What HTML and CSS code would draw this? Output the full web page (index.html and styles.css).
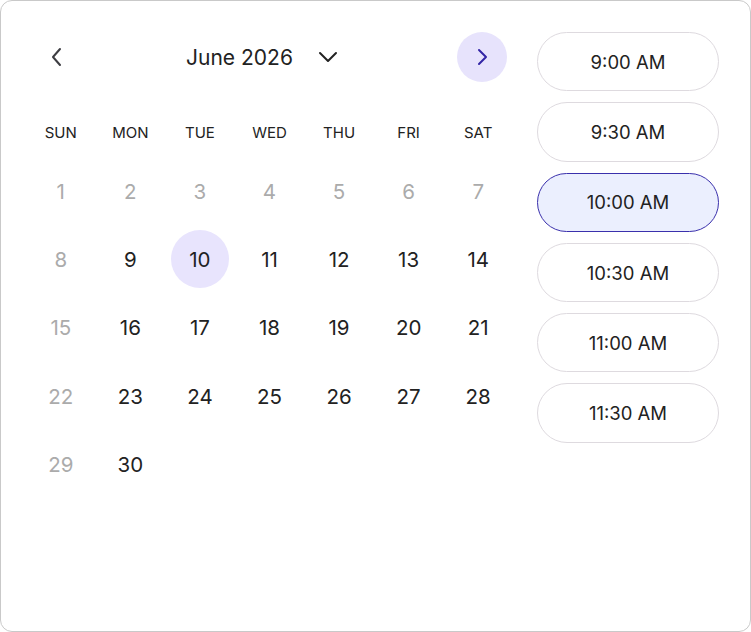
FILE: index.html
```html
<!DOCTYPE html>
<html lang="en">
<head>
    <meta charset="UTF-8">
    <meta name="viewport" content="width=device-width, initial-scale=1.0">
    <title>Book a time</title>
    <link rel="stylesheet" href="styles.css">
</head>
<body>
    <div class="booking">
        <div class="calendar">
            <div class="cal-header">
                <button class="nav-btn" aria-label="Previous month">
                    <svg width="20" height="20" viewBox="0 0 20 20"><path d="M13 2 L6 10 L13 18" fill="none" stroke="#3d3d42" stroke-width="2" stroke-linecap="round" stroke-linejoin="round"/></svg>
                </button>
                <div class="month-pick">
                    <span class="month-label">June 2026</span>
                    <svg width="22" height="22" viewBox="0 0 22 22"><path d="M3 7 L11 15 L19 7" fill="none" stroke="#222" stroke-width="2" stroke-linecap="round" stroke-linejoin="round"/></svg>
                </div>
                <button class="nav-btn next" aria-label="Next month">
                    <svg width="20" height="20" viewBox="0 0 20 20"><path d="M7 3 L14 10 L7 17" fill="none" stroke="#3325a6" stroke-width="2" stroke-linecap="round" stroke-linejoin="round"/></svg>
                </button>
            </div>

            <div class="weekdays">
                <span>SUN</span><span>MON</span><span>TUE</span><span>WED</span><span>THU</span><span>FRI</span><span>SAT</span>
            </div>

            <div class="days" id="days"></div>
        </div>

        <div class="slots">
            <button class="slot">9:00 AM</button>
            <button class="slot">9:30 AM</button>
            <button class="slot selected">10:00 AM</button>
            <button class="slot">10:30 AM</button>
            <button class="slot">11:00 AM</button>
            <button class="slot">11:30 AM</button>
        </div>
    </div>

    <script>
        // Days before the 8th and every Sunday can't be booked
        const selected = 10;
        const daysEl = document.getElementById('days');
        for (let d = 1; d <= 30; d++) {
            const cell = document.createElement('div');
            cell.className = 'day';
            if (d < 8 || d % 7 === 1) cell.classList.add('disabled');
            if (d === selected) cell.classList.add('active');
            cell.innerHTML = `<span>${d}</span>`;
            daysEl.appendChild(cell);
        }
    </script>
</body>
</html>
```

FILE: styles.css
```css
* {
    margin: 0;
    padding: 0;
    box-sizing: border-box;
}

body {
    font-family: 'Inter', 'Noto Sans', sans-serif;
    color: #222;
    background: #fff;
}

button {
    font-family: inherit;
    border: none;
    background: none;
    cursor: pointer;
}

.booking {
    width: 751px;
    height: 632px;
    border: 1px solid #c9c9c9;
    border-radius: 12px;
    padding: 31px 31px 0 25px;
    display: flex;
    gap: 24px;
}

.calendar {
    width: 487px;
}

.cal-header {
    display: flex;
    align-items: center;
    justify-content: space-between;
    padding: 0 6px;
    height: 50px;
}

.nav-btn {
    width: 50px;
    height: 50px;
    border-radius: 50%;
    display: flex;
    align-items: center;
    justify-content: center;
}

.nav-btn.next {
    background: #e7e3fc;
}

.month-pick {
    display: flex;
    align-items: center;
    gap: 24px;
    margin-right: 14px;
}

.month-label {
    font-size: 21px;
    color: #222;
}

.weekdays {
    display: grid;
    grid-template-columns: repeat(7, 1fr);
    margin-top: 35px;
    height: 30px;
    align-items: center;
    text-align: center;
    font-size: 15px;
    color: #222;
}

.days {
    display: grid;
    grid-template-columns: repeat(7, 1fr);
    grid-auto-rows: 68.3px;
    margin-top: 10px;
}

.day {
    display: flex;
    align-items: center;
    justify-content: center;
    font-size: 20.5px;
    color: #222;
}

.day span {
    width: 58px;
    height: 58px;
    border-radius: 50%;
    display: flex;
    align-items: center;
    justify-content: center;
}

.day.disabled {
    color: #ababab;
}

.day.active span {
    background: #e8e4fd;
}

.slots {
    width: 182px;
    display: flex;
    flex-direction: column;
    gap: 11px;
}

.slot {
    height: 59.3px;
    flex-shrink: 0;
    border: 1px solid #dedadf;
    border-radius: 30px;
    font-size: 18.5px;
    color: #222;
    background: #fff;
}

.slot.selected {
    background: #ebeffe;
    border-color: #3a30ac;
}
```
